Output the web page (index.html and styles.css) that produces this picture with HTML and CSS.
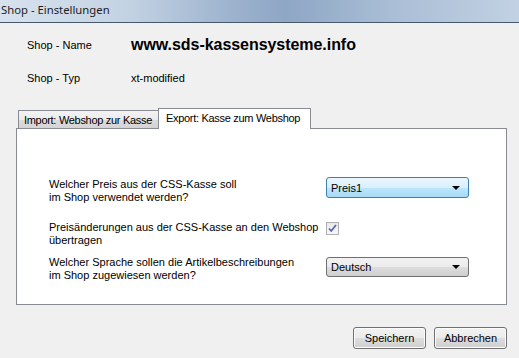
FILE: index.html
```html
<!DOCTYPE html>
<html>

<head>
    <meta charset="utf-8">
    <link rel="stylesheet" href="styles.css">
</head>

<body>
    <div class="titlebar">Shop - Einstellungen</div>

    <div class="info">
        <div class="info-row">
            <span class="info-label">Shop - Name</span>
            <span class="info-value big">www.sds-kassensysteme.info</span>
        </div>
        <div class="info-row">
            <span class="info-label">Shop - Typ</span>
            <span class="info-value">xt-modified</span>
        </div>
    </div>

    <div class="tabs">
        <div class="tab-strip">
            <div class="tab">Import: Webshop zur Kasse</div>
            <div class="tab active">Export: Kasse zum Webshop</div>
        </div>
        <div class="pane">
            <div class="form-row row-price">
                <div class="form-label">Welcher Preis aus der CSS-Kasse soll<br>im Shop verwendet werden?</div>
                <div class="combo focused">
                    <span>Preis1</span>
                    <span class="arrow"></span>
                </div>
            </div>
            <div class="form-row row-sync">
                <div class="form-label">Preisänderungen aus der CSS-Kasse an den Webshop<br>übertragen</div>
                <div class="check">
                    <svg width="9" height="9" viewBox="0 0 9 9">
                        <path d="M1 4.5 L3.2 7 L8 1" fill="none" stroke="#4d66a8" stroke-width="1.6" />
                    </svg>
                </div>
            </div>
            <div class="form-row row-lang">
                <div class="form-label">Welcher Sprache sollen die Artikelbeschreibungen<br>im Shop zugewiesen werden?</div>
                <div class="combo">
                    <span>Deutsch</span>
                    <span class="arrow"></span>
                </div>
            </div>
        </div>
    </div>

    <div class="buttons">
        <button class="btn">Speichern</button>
        <button class="btn">Abbrechen</button>
    </div>
</body>

</html>
```

FILE: styles.css
```css
* {
    margin: 0;
    padding: 0;
    box-sizing: border-box;
}

body {
    width: 519px;
    height: 358px;
    overflow: hidden;
    font-family: 'Liberation Sans', Arial, sans-serif;
    font-size: 11px;
    color: #000000;
    background: #f0f0f0;
}

.titlebar {
    height: 23px;
    padding: 1px 0 0 1px;
    font-family: 'Noto Sans', 'DejaVu Sans', sans-serif;
    font-size: 11.3px;
    line-height: 17px;
    color: #1e1e1e;
    background: linear-gradient(to right, #d7e2ee 0%, #c3d2e3 25%, #9cb2cd 45%, #8ea7c5 55%, #a9bdd5 75%, #c2d1e3 100%);
    border-bottom: 1px solid #46596b;
}

.info {
    padding: 12px 0 0 27px;
}

.info-row {
    display: flex;
    align-items: center;
    height: 20px;
}

.info-row + .info-row {
    margin-top: 13px;
}

.info-label {
    width: 104px;
}

.info-value.big {
    font-size: 16px;
    font-weight: bold;
    letter-spacing: -0.05px;
}

/* Tabs */
.tabs {
    margin: 20px 12px 0 16px;
}

.tab-strip {
    display: flex;
    align-items: flex-end;
    height: 20px;
    padding-left: 2px;
}

.tab {
    width: 140px;
    height: 18px;
    padding-left: 5px;
    line-height: 18px;
    font-size: 11px;
    letter-spacing: -0.3px;
    white-space: nowrap;
    border: 1px solid #898c95;
    border-bottom: none;
    border-right: none;
    background: linear-gradient(#f3f3f3 0%, #ebebeb 50%, #dcdcdc 51%, #d4d4d4 100%);
    color: #000000;
}

.tab.active {
    width: 153px;
    height: 21px;
    margin-bottom: -1px;
    padding-left: 7px;
    line-height: 19px;
    border-right: 1px solid #898c95;
    background: #ffffff;
    position: relative;
}

.pane {
    height: 177px;
    padding: 49px 0 0 32px;
    background: #ffffff;
    border: 1px solid #898c95;
}

.form-row {
    display: flex;
    align-items: flex-start;
}

.form-label {
    width: 277px;
    line-height: 13px;
}

.row-sync {
    margin-top: 17px;
}

.row-lang {
    margin-top: 9px;
}

.combo {
    display: flex;
    align-items: center;
    justify-content: space-between;
    width: 143px;
    height: 20px;
    margin-top: 1px;
    padding: 0 8px 0 4px;
    border: 1px solid #707070;
    border-radius: 3px;
    background: linear-gradient(#f2f2f2 0%, #ebebeb 50%, #dddddd 51%, #cfcfcf 100%);
}

.combo.focused {
    height: 21px;
    margin-top: -1px;
    border-color: #3c7fb1;
    background: linear-gradient(#eaf6fd 0%, #d9f0fc 50%, #bee6fd 51%, #a7d9f5 100%);
}

.arrow {
    width: 0;
    height: 0;
    border-left: 4px solid transparent;
    border-right: 4px solid transparent;
    border-top: 4px solid #000000;
}

.check {
    display: flex;
    align-items: center;
    justify-content: center;
    width: 13px;
    height: 13px;
    margin-top: 1px;
    border: 1px solid #b1b1b1;
    background: linear-gradient(#e8e8e8, #f7f7f7);
}

/* Buttons */
.buttons {
    display: flex;
    justify-content: flex-end;
    gap: 8px;
    margin: 22px 12px 0 0;
}

.btn {
    width: 73px;
    height: 22px;
    font-family: 'Liberation Sans', Arial, sans-serif;
    font-size: 11px;
    color: #000000;
    border: 1px solid #707070;
    border-radius: 3px;
    background: linear-gradient(#f2f2f2 0%, #ebebeb 50%, #dddddd 51%, #cfcfcf 100%);
    box-shadow: inset 0 0 0 1px #fcfcfc;
}
```
